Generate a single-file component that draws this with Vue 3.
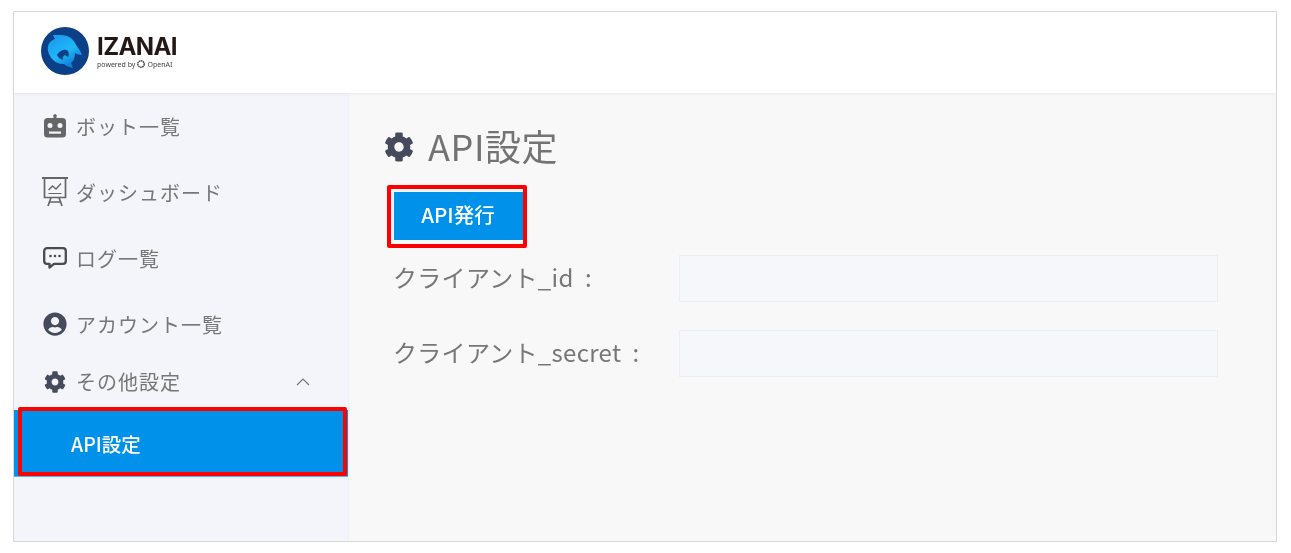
<script setup>
const cog = 'M487.4 315.7l-42.6-24.6c4.3-23.2 4.3-47 0-70.2l42.6-24.6c4.9-2.8 7.1-8.6 5.5-14-11.1-35.6-30-67.8-54.7-94.6-3.8-4.1-10-5.1-14.8-2.3L380.8 110c-17.9-15.4-38.5-27.3-60.8-35.1V25.8c0-5.6-3.9-10.5-9.4-11.7-36.7-8.2-74.3-7.8-109.2 0-5.5 1.2-9.4 6.1-9.4 11.7V75c-22.2 7.9-42.8 19.8-60.8 35.1L88.7 85.5c-4.9-2.8-11-1.9-14.8 2.3-24.7 26.7-43.6 58.9-54.7 94.6-1.7 5.4.6 11.2 5.5 14L67.3 221c-4.3 23.2-4.3 47 0 70.2l-42.6 24.6c-4.9 2.8-7.1 8.6-5.5 14 11.1 35.6 30 67.8 54.7 94.6 3.8 4.1 10 5.1 14.8 2.3l42.6-24.6c17.9 15.4 38.5 27.3 60.8 35.1v49.2c0 5.6 3.9 10.5 9.4 11.7 36.7 8.2 74.3 7.8 109.2 0 5.5-1.2 9.4-6.1 9.4-11.7v-49.2c22.2-7.9 42.8-19.8 60.8-35.1l42.6 24.6c4.9 2.8 11 1.9 14.8-2.3 24.7-26.7 43.6-58.9 54.7-94.6 1.5-5.5-.7-11.3-5.6-14.1zM256 336c-44.1 0-80-35.9-80-80s35.9-80 80-80 80 35.9 80 80-35.9 80-80 80z'
const user = 'M248 8C111 8 0 119 0 256s111 248 248 248 248-111 248-248S385 8 248 8zm0 96c48.6 0 88 39.4 88 88s-39.4 88-88 88-88-39.4-88-88 39.4-88 88-88zm0 344c-58.7 0-111.3-26.6-146.5-68.2 18.8-35.4 55.6-59.8 98.5-59.8 2.4 0 4.8.4 7.1 1.1 13 4.2 26.6 6.9 40.9 6.9 14.3 0 28-2.7 40.9-6.9 2.3-.7 4.7-1.1 7.1-1.1 42.9 0 79.7 24.4 98.5 59.8C359.3 421.4 306.7 448 248 448z'
</script>

<template>
  <div class="page">
    <div class="frame">
      <header class="header">
        <svg class="logo" viewBox="0 0 48 48" aria-hidden="true">
          <defs>
            <linearGradient id="dolphin" x1="0.2" y1="0.1" x2="0.7" y2="0.9">
              <stop offset="0" stop-color="#1c9cf0" />
              <stop offset="0.55" stop-color="#1fb8f8" />
              <stop offset="1" stop-color="#0e7fd8" />
            </linearGradient>
          </defs>
          <circle cx="24" cy="24" r="24" fill="#0b3f86" />
          <path d="M12 8l8 0C27 8 33 12 35 18C37 21 40 24 41 28C38 28 36 27 34 26C34 30 33 34 30 36L32 41C28 40 25 39 23 37C16 38 9 32 7 24C6 19 8 14 14 12Z" fill="url(#dolphin)" />
          <path d="M16 28C18 24 24 21 27 24C28 26 28 28 27 30L24 28C22 29 21 31 22 33C19 32 17 30 16 28Z" fill="#0b3f86" />
        </svg>
        <div class="brand">
          <div class="brand-name">IZANAI</div>
          <div class="brand-sub">
            <span>powered by</span>
            <svg class="openai" viewBox="0 0 10 10" aria-hidden="true">
              <circle cx="5" cy="5" r="4" fill="none" stroke="#444" stroke-width="1.800" stroke-dasharray="2 .6" />
            </svg>
            <span>OpenAI</span>
          </div>
        </div>
      </header>

      <div class="body">
        <aside class="sidebar">
          <nav>
            <a class="item">
              <span class="icon">
                <svg class="i-robot" viewBox="0 0 24 24" aria-hidden="true">
                  <rect x="1" y="4" width="22" height="19.500" rx="3.500" fill="#666" />
                  <rect x="10.500" y="1" width="3" height="4" fill="#666" />
                  <circle cx="12" cy="1.500" r="1.500" fill="#666" />
                  <circle cx="7" cy="11.500" r="2.500" fill="#f3f5fa" />
                  <circle cx="17" cy="11.500" r="2.500" fill="#f3f5fa" />
                  <rect x="6" y="17.500" width="12" height="2.200" fill="#f3f5fa" />
                </svg>
              </span>
              <span>ボット一覧</span>
            </a>
            <a class="item">
              <span class="icon">
                <svg class="i-board" viewBox="0 0 26 30" fill="none" stroke="#666" aria-hidden="true">
                  <path d="M0 1h26" stroke-width="2" />
                  <path d="M2.500 1v19.500h21V1" stroke-width="1.700" />
                  <path d="M6.500 13l4-4 3.500 3 5-5.500" stroke-width="1.400" />
                  <path d="M6.500 16.500h13" stroke-width="1" />
                  <path d="M9 20.500L6 29M17 20.500L20 29M7.500 25h11" stroke-width="1.700" />
                </svg>
              </span>
              <span>ダッシュボード</span>
            </a>
            <a class="item">
              <span class="icon">
                <svg class="i-comment" viewBox="0 0 24 22" aria-hidden="true">
                  <path d="M4 1.200h16A2.800 2.800 0 0 1 22.800 4v10A2.800 2.800 0 0 1 20 16.800h-9l-4.500 3.700v-3.700H4A2.800 2.800 0 0 1 1.200 14V4A2.800 2.800 0 0 1 4 1.200z" fill="none" stroke="#4a4a4a" stroke-width="2.300" stroke-linejoin="round" />
                  <circle cx="7.500" cy="9" r="1.300" fill="#4a4a4a" />
                  <circle cx="12" cy="9" r="1.300" fill="#4a4a4a" />
                  <circle cx="16.500" cy="9" r="1.300" fill="#4a4a4a" />
                </svg>
              </span>
              <span>ログ一覧</span>
            </a>
            <a class="item">
              <span class="icon">
                <svg class="i-user" viewBox="0 0 496 512" aria-hidden="true"><path :d="user" fill="#454a5c" /></svg>
              </span>
              <span>アカウント一覧</span>
            </a>
            <a class="item item-group">
              <span class="icon">
                <svg class="i-cog" viewBox="0 0 512 512" aria-hidden="true"><path :d="cog" fill="#454a5c" /></svg>
              </span>
              <span>その他設定</span>
              <svg class="chevron" viewBox="0 0 14 8" aria-hidden="true">
                <path d="M1 7l6-6 6 6" fill="none" stroke="#777" stroke-width="1.200" />
              </svg>
            </a>
            <a class="item-active">
              API設定
              <span class="mark mark-side"></span>
            </a>
          </nav>
        </aside>

        <main class="main">
          <h1 class="title">
            <svg class="title-cog" viewBox="0 0 512 512" aria-hidden="true"><path :d="cog" fill="#454a5c" /></svg>
            <span class="title-text">API設定</span>
          </h1>
          <button class="btn" type="button">
            API発行
            <span class="mark mark-btn"></span>
          </button>
          <div class="form">
            <label class="label">クライアント_id&nbsp;&nbsp;:</label>
            <div class="field"></div>
            <label class="label">クライアント_secret&nbsp;&nbsp;:</label>
            <div class="field"></div>
          </div>
        </main>
      </div>
    </div>
  </div>
</template>

<style>
html, body { margin: 0; background: #fff; }
</style>

<style scoped>
.page {
  width: 1291px;
  height: 553px;
  box-sizing: border-box;
  padding: 11px 14px 11px 13px;
  font-family: "Noto Sans CJK JP", "Noto Sans", sans-serif;
  filter: blur(0.35px);
  overflow: hidden;
}
.frame {
  height: 100%;
  box-sizing: border-box;
  border: 1.5px solid #d9d9d9;
  display: flex;
  flex-direction: column;
  background: #fff;
}
.header {
  height: 81px;
  flex: none;
  display: flex;
  align-items: center;
  padding-left: 27px;
  gap: 8px;
  box-shadow: 0 1px 3px rgba(0, 0, 0, .06);
  position: relative;
}
.logo { width: 48px; height: 48px; flex: none; margin-top: -4px; }
.brand { margin-top: -2px; }
.brand-name {
  font-family: "Inter", sans-serif;
  font-weight: 700;
  font-size: 24px;
  line-height: 24px;
  letter-spacing: -0.6px;
  color: #231815;
}
.brand-sub {
  display: flex;
  align-items: center;
  gap: 2px;
  font-family: "Noto Sans", sans-serif;
  font-size: 7px;
  line-height: 9px;
  color: #444;
  margin-top: 1px;
}
.openai { width: 8px; height: 8px; }
.body { flex: 1; display: flex; min-height: 0; }
.sidebar {
  width: 334px;
  flex: none;
  background: #f3f5fa;
  border-right: 1px solid #eef0f4;
}
.item {
  height: 66px;
  display: flex;
  align-items: center;
  padding-left: 23px;
  font-size: 20px;
  letter-spacing: 1px;
  color: #777;
}
.icon {
  width: 36px;
  flex: none;
  display: flex;
  justify-content: center;
  margin-right: 3px;
}
.i-robot, .i-user { width: 24px; height: 24px; }
.i-comment { width: 24px; height: 22px; }
.i-board { width: 26px; height: 30px; margin-left: -1px; }
.i-cog { width: 22px; height: 22px; }
.item-group { height: 52px; padding-bottom: 3px; box-sizing: border-box; position: relative; }
.chevron {
  position: absolute;
  left: 282px;
  top: 21px;
  width: 14px;
  height: 8px;
}
.item-active {
  display: flex;
  align-items: center;
  height: 66px;
  margin-top: 1px;
  padding-left: 57px;
  background: #0091ea;
  border-bottom: 1.5px solid #4db8f5;
  color: #fff;
  font-size: 19.500px;
  font-weight: 500;
  position: relative;
}
.mark {
  position: absolute;
  border: 4px solid #f00;
  border-radius: 2px;
  pointer-events: none;
}
.mark-side { left: 4px; right: 1px; top: -3px; bottom: 0; }
.main { flex: 1; background: #f8f8f8; padding: 0 0 0 35px; }
.title {
  margin: 31px 0 0;
  height: 44px;
  display: flex;
  align-items: center;
  gap: 14px;
  font-size: 36px;
  font-weight: 400;
  color: #737373;
  letter-spacing: 0.6px;
}
.title-cog { width: 30px; height: 30px; flex: none; margin-top: 2px; }
.title-text { margin-top: -2px; }
.btn {
  display: block;
  position: relative;
  margin: 23.500px 0 0 9.500px;
  width: 129px;
  height: 48.500px;
  padding: 0 0 3px;
  border: 0;
  background: #0091ea;
  color: #fff;
  font-family: inherit;
  font-size: 20.500px;
  font-weight: 500;
}
.mark-btn { left: -6.500px; right: -4px; top: -7px; bottom: -8px; }
.form {
  margin: 15px 0 0 9px;
  display: grid;
  grid-template-columns: 286px 539px;
  grid-auto-rows: 47px;
  row-gap: 28px;
  align-items: center;
}
.label { font-size: 24px; letter-spacing: .3px; color: #777; margin-top: -4px; white-space: nowrap; }
.field {
  height: 47px;
  box-sizing: border-box;
  background: #f5f7fb;
  border: 1.5px solid #eceef3;
}
</style>
